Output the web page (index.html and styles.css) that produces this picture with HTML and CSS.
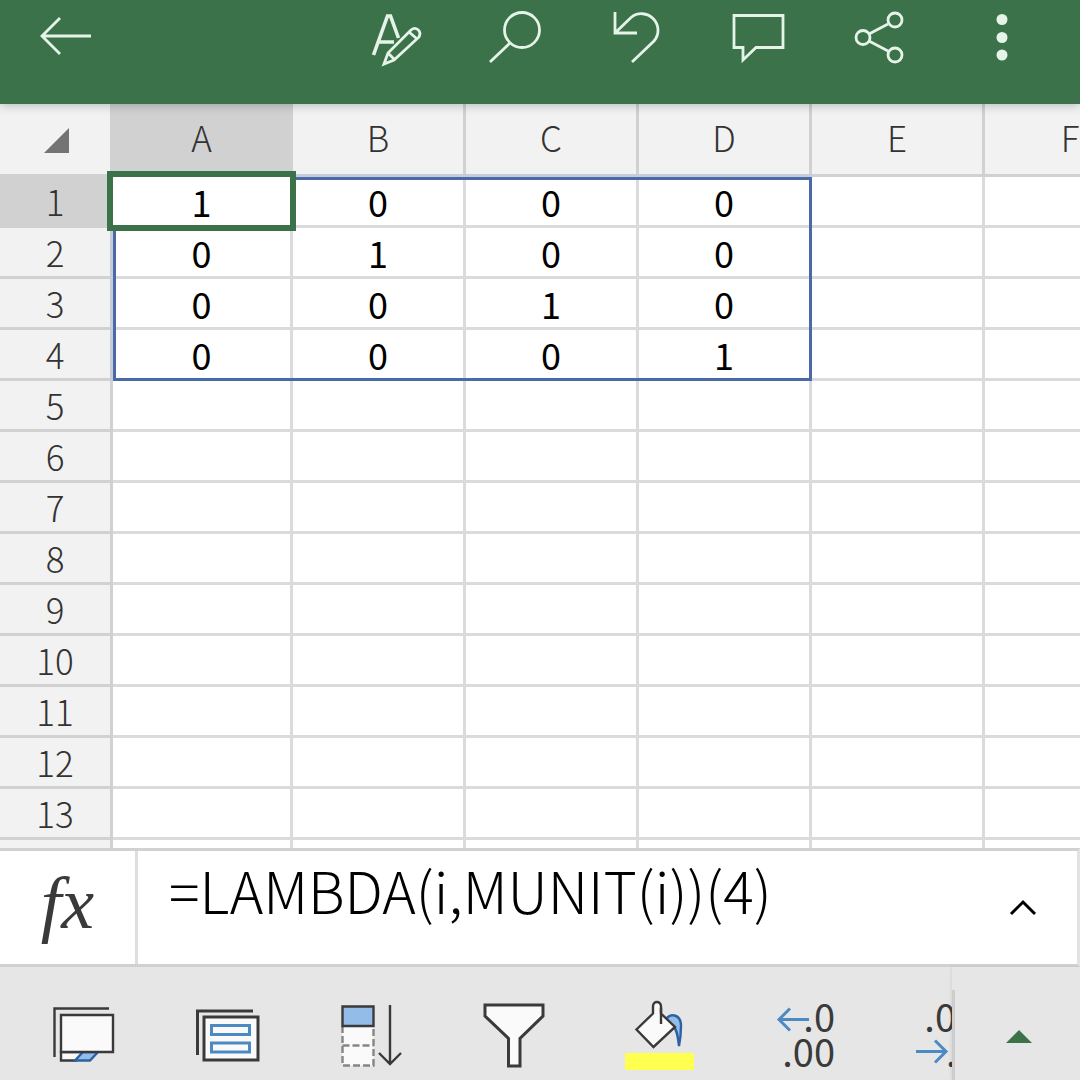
FILE: index.html
```html
<!DOCTYPE html>
<html lang="ja">
<head>
    <meta charset="UTF-8">
    <meta name="viewport" content="width=device-width, initial-scale=1.0">
    <title>Excel</title>
    <link rel="stylesheet" href="styles.css">
</head>
<body>
    <header class="toolbar">
        <button type="button" class="tool back" aria-label="Back">
            <svg viewBox="0 0 60 60"><path d="M57 28H8M26 10L8 28l18 18"/></svg>
        </button>
        <button type="button" class="tool" aria-label="Edit">
            <svg viewBox="0 0 60 60">
                <path d="M6.500 47L20.500 8h3l8 22M12 34h15" stroke-width="3.6"/>
                <path d="M17 56l4-11 23-23c5-4 11 1 8 7L27 52zM21 45l7 7M42 24l7 6"/>
            </svg>
        </button>
        <button type="button" class="tool" aria-label="Search">
            <svg viewBox="0 0 60 60"><circle cx="34" cy="22" r="17.5"/><path d="M22 35L2 54"/></svg>
        </button>
        <button type="button" class="tool" aria-label="Undo">
            <svg viewBox="0 0 60 60"><path d="M6 4v21h22M6 25L22 9.500A16.500 16.500 0 0 1 45 33L23 54"/></svg>
        </button>
        <button type="button" class="tool" aria-label="Comment">
            <svg viewBox="0 0 60 60"><path d="M4 7.500h49v32H26L13 52V39.500H4z"/></svg>
        </button>
        <button type="button" class="tool" aria-label="Share">
            <svg viewBox="0 0 60 60">
                <path d="M18 26l19-10M18 33l19 10"/>
                <circle cx="12" cy="29.500" r="7"/><circle cx="44" cy="12" r="7"/><circle cx="44" cy="47" r="7"/>
            </svg>
        </button>
        <button type="button" class="tool" aria-label="More">
            <svg viewBox="0 0 60 60" class="dots"><circle cx="30" cy="11.500" r="5.500"/><circle cx="30" cy="29.500" r="5.500"/><circle cx="30" cy="47" r="5.500"/></svg>
        </button>
    </header>

    <main class="sheet">
        <table class="grid">
            <colgroup>
                <col class="col-num"><col class="col-a"><col><col><col><col><col>
            </colgroup>
            <thead>
                <tr>
                    <th class="corner"><svg viewBox="0 0 26 26"><path d="M25 0v25H0z"/></svg></th>
                    <th class="active">A</th><th>B</th><th>C</th><th>D</th><th>E</th><th>F</th>
                </tr>
            </thead>
            <tbody>
                <tr><th class="active">1</th><td class="selected">1<span class="spill"></span></td><td>0</td><td>0</td><td>0</td><td></td><td></td></tr>
                <tr><th>2</th><td>0</td><td>1</td><td>0</td><td>0</td><td></td><td></td></tr>
                <tr><th>3</th><td>0</td><td>0</td><td>1</td><td>0</td><td></td><td></td></tr>
                <tr><th>4</th><td>0</td><td>0</td><td>0</td><td>1</td><td></td><td></td></tr>
                <tr><th>5</th><td></td><td></td><td></td><td></td><td></td><td></td></tr>
                <tr><th>6</th><td></td><td></td><td></td><td></td><td></td><td></td></tr>
                <tr><th>7</th><td></td><td></td><td></td><td></td><td></td><td></td></tr>
                <tr><th>8</th><td></td><td></td><td></td><td></td><td></td><td></td></tr>
                <tr><th>9</th><td></td><td></td><td></td><td></td><td></td><td></td></tr>
                <tr><th>10</th><td></td><td></td><td></td><td></td><td></td><td></td></tr>
                <tr><th>11</th><td></td><td></td><td></td><td></td><td></td><td></td></tr>
                <tr><th>12</th><td></td><td></td><td></td><td></td><td></td><td></td></tr>
                <tr><th>13</th><td></td><td></td><td></td><td></td><td></td><td></td></tr>
                <tr><th></th><td></td><td></td><td></td><td></td><td></td><td></td></tr>
            </tbody>
        </table>
    </main>

    <div class="formula-bar">
        <label class="fx" for="formula">fx</label>
        <input type="text" id="formula" class="formula" value="=LAMBDA(i,MUNIT(i))(4)">
        <button type="button" class="expand" aria-label="Expand">
            <svg viewBox="0 0 30 18"><path d="M3 15L15 3l12 12"/></svg>
        </button>
    </div>

    <footer class="ribbon">
        <div class="commands">
            <button type="button" class="command" aria-label="Sheet view">
                <svg viewBox="0 0 80 80">
                    <path d="M10.500 57V8.500H65"/>
                    <path class="paper" d="M17 52v8.500h15l8-8.500z"/>
                    <path class="blue" d="M39 52h15l-8 8.500H31z"/>
                    <path class="paper" d="M17 15h52v37H17z"/>
                </svg>
            </button>
            <button type="button" class="command" aria-label="Card view">
                <svg viewBox="0 0 80 80">
                    <path d="M9.500 55V11H65" stroke-width="3"/>
                    <path class="paper" d="M16 17h54v43H16z" stroke-width="3"/>
                    <path class="line-blue" d="M23.500 25.500h38v9h-38zM23.500 43h38v9h-38z"/>
                </svg>
            </button>
            <button type="button" class="command" aria-label="Sort">
                <svg viewBox="0 0 80 80">
                    <path class="paper dashed" d="M10.500 26v39.500h31V26M10.500 45.500h31"/>
                    <path class="cell-blue" d="M10.500 6.500h31V26h-31z"/>
                    <path d="M58 5v59M47 53l11 11 11-11"/>
                </svg>
            </button>
            <button type="button" class="command" aria-label="Filter">
                <svg viewBox="0 0 80 80"><path class="paper" d="M9 5h58v11L44 38.500V66H32.500V38.500L9 16z" stroke-width="3"/></svg>
            </button>
            <button type="button" class="command" aria-label="Fill color">
                <svg viewBox="0 0 80 80">
                    <path class="blue" d="M46 19c5-6 15-5 15 7 0 8-1 15-2 20-1-8-2-19-7-20z"/>
                    <path class="paper" d="M33 13.500L16.500 29.500l17 17.500L55 27 41 13.500V6.500c0-6-8-6-8 0z"/>
                    <path d="M41 8v16"/>
                    <path class="yellow" d="M5 53h69v17H5z"/>
                </svg>
            </button>
            <button type="button" class="command" aria-label="Increase decimal">
                <svg viewBox="0 0 80 80">
                    <path class="line-blue" d="M45 19.500H15M26 8.500l-11 11 11 11"/>
                    <text x="71" y="32" text-anchor="end">.0</text>
                    <text x="71" y="67" text-anchor="end">.00</text>
                </svg>
            </button>
            <button type="button" class="command" aria-label="Decrease decimal">
                <svg viewBox="0 0 80 80">
                    <path class="line-blue" d="M8 51.500h30M27 40.500l11 11-11 11"/>
                    <text x="48" y="32" text-anchor="end">.0</text>
                    <text x="38" y="67">.00</text>
                </svg>
            </button>
        </div>
        <button type="button" class="open-ribbon" aria-label="Open ribbon">
            <svg viewBox="0 0 26 14"><path d="M0 13L13 0l13 13z"/></svg>
        </button>
    </footer>
</body>
</html>
```

FILE: styles.css
```css
:root {
    --green: #3b724a;
    --icon-light: #e6f3e8;
    --head: #f2f2f2;
    --head-line: #d1d1d1;
    --cell-line: #dadbdc;
    --range: #4a69a8;
    --ribbon: #e6e6e6;
    --ink: #3a3a3a;
    --blue: #4c8ac4;
}

* {
    box-sizing: border-box;
}

body {
    margin: 0;
    height: 100vh;
    display: flex;
    flex-direction: column;
    overflow: hidden;
    background-color: #fff;
    font-family: "Noto Sans CJK JP", "Noto Sans", sans-serif;
}

button {
    margin: 0;
    padding: 0;
    border: 0;
    background: none;
    font-family: inherit;
}

svg {
    display: block;
    fill: none;
}

/* top toolbar */
.toolbar {
    position: relative;
    z-index: 3;
    flex: none;
    display: flex;
    gap: 61px;
    height: 104px;
    padding: 8px 48px 0 34px;
    background-color: var(--green);
    box-shadow: 0 1px 10px rgba(0, 0, 0, 0.25);
}

.tool {
    width: 60px;
    height: 60px;
}

.tool svg {
    width: 60px;
    height: 60px;
    stroke: var(--icon-light);
    stroke-width: 2.8;
}

.tool .dots {
    fill: var(--icon-light);
    stroke: none;
}

.back {
    margin-right: auto;
}

/* sheet */
.sheet {
    flex: 1;
    min-height: 0;
    overflow: hidden;
}

.grid {
    width: 1158px;
    table-layout: fixed;
    border-collapse: separate;
    border-spacing: 0;
}

.grid col {
    width: 173px;
}

.grid .col-num {
    width: 113px;
}

.grid .col-a {
    width: 180px;
}

.grid th,
.grid td {
    height: 51px;
    padding: 0;
    text-align: center;
    line-height: 48px;
    border-right: 3px solid var(--cell-line);
    border-bottom: 3px solid var(--cell-line);
}

.grid th {
    background-color: var(--head);
    border-color: var(--head-line);
    color: #333;
    font-size: 35px;
    font-weight: 300;
}

.grid td {
    color: #000;
    font-size: 36px;
    font-weight: 400;
}

.grid thead th {
    height: 73px;
    padding-bottom: 4px;
}

.grid thead .corner {
    padding: 4px 0 0 44px;
}

.grid .active {
    background-color: var(--head-line);
}

.corner svg {
    width: 26px;
    height: 26px;
    fill: #747474;
}

.selected {
    position: relative;
}

.selected::after {
    content: "";
    position: absolute;
    inset: -6px;
    border: 6px solid var(--green);
}

/* outline of the spilled 4x4 range */
.spill {
    position: absolute;
    top: 0;
    left: 0;
    width: 699px;
    height: 204px;
    border: 3px solid var(--range);
    box-shadow: 0 0 0 3px rgba(160, 185, 255, 0.2);
    clip-path: polygon(183px -3px, 699px -3px, 699px 204px, -3px 204px, -3px 54px, 183px 54px);
}

/* formula bar */
.formula-bar {
    flex: none;
    display: flex;
    height: 119px;
    border-top: 3px solid var(--head-line);
    border-bottom: 3px solid var(--head-line);
    border-right: 3px solid #e2e2e2;
}

.fx {
    width: 138px;
    border-right: 3px solid #dedede;
    color: var(--ink);
    font-family: "Liberation Serif", serif;
    font-size: 74px;
    font-style: italic;
    line-height: 104px;
    text-align: center;
}

.formula {
    flex: 1;
    min-width: 0;
    height: 76px;
    padding: 0 0 0 31px;
    border: 0;
    outline: 0;
    background: none;
    color: #000;
    font-family: inherit;
    font-size: 57px;
    font-weight: 300;
}

.expand {
    width: 108px;
}

.expand svg {
    width: 30px;
    height: 18px;
    margin: 0 auto;
    stroke: #000;
    stroke-width: 3;
}

/* bottom ribbon */
.ribbon {
    flex: none;
    display: flex;
    height: 113px;
    background-color: var(--ribbon);
}

.commands {
    flex: 1;
    min-width: 0;
    display: flex;
    gap: 64px;
    padding: 33px 0 0 44px;
    overflow: hidden;
}

.command {
    flex: none;
    width: 80px;
    height: 80px;
}

.command svg {
    width: 80px;
    height: 80px;
    stroke: var(--ink);
    stroke-width: 2.4;
}

.command text {
    fill: var(--ink);
    stroke: none;
    font-size: 38px;
    font-weight: 400;
}

.command .paper {
    fill: #fafafa;
}

.command .dashed {
    stroke: #858585;
    stroke-dasharray: 7 3;
}

.command .blue {
    fill: #93bce9;
    stroke: #2c62a5;
}

.command .cell-blue {
    fill: #93bce9;
}

.command .line-blue {
    stroke: var(--blue);
    stroke-width: 3;
}

.command .yellow {
    fill: #ffff50;
    stroke: none;
}

.open-ribbon {
    position: relative;
    width: 128px;
    padding: 26px 0 0 5px;
    box-shadow: -1px 0 3px rgba(0, 0, 0, 0.08);
}

.open-ribbon::before {
    content: "";
    position: absolute;
    top: 23px;
    bottom: 0;
    left: 0;
    width: 3px;
    background-color: #cdcdcd;
}

.open-ribbon svg {
    width: 26px;
    height: 14px;
    margin: 0 auto;
    fill: var(--green);
}
```
